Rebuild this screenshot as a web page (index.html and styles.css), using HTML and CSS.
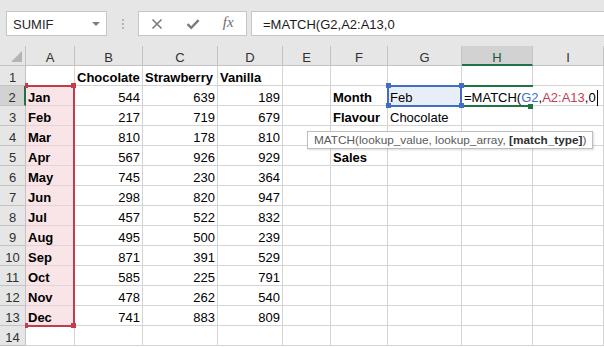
FILE: index.html
```html
<!DOCTYPE html>
<html>
<head>
<meta charset="utf-8">
<link rel="stylesheet" href="styles.css">
</head>
<body>
<div class="toolbar">
  <div class="namebox"><span>SUMIF</span><span class="caret"></span></div>
  <div class="grip"><i></i><i></i><i></i></div>
  <div class="fxbox">
    <span class="btn"><svg width="12" height="12" viewBox="0 0 12 12"><path d="M1.5 1.5 L10.5 10.5 M10.5 1.5 L1.5 10.5" stroke="#7b7b7b" stroke-width="1.6" fill="none"/></svg></span>
    <span class="btn"><svg width="14" height="12" viewBox="0 0 14 12"><path d="M1.5 6.2 L5.2 9.8 L12.6 2.2" stroke="#7b7b7b" stroke-width="2.4" fill="none"/></svg></span>
    <span class="btn fx">fx</span>
  </div>
  <div class="input">=MATCH(G2,A2:A13,0</div>
</div>
<div class="sheet">
  <div class="grid">
    <div class="hd corner"><span class="tri"></span></div>
    <div class="hd">A</div><div class="hd">B</div><div class="hd">C</div><div class="hd">D</div><div class="hd">E</div><div class="hd">F</div><div class="hd">G</div><div class="hd sel-col">H</div><div class="hd">I</div>

    <div class="rh">1</div><div class="c"></div><div class="c b">Chocolate</div><div class="c b">Strawberry</div><div class="c b">Vanilla</div><div class="c"></div><div class="c"></div><div class="c"></div><div class="c"></div><div class="c"></div>

    <div class="rh sel-row">2</div><div class="c b pink">Jan</div><div class="c n">544</div><div class="c n">639</div><div class="c n">189</div><div class="c"></div><div class="c b">Month</div><div class="c blue">Feb</div><div class="c over">=MATCH(<span class="ref-g">G2</span>,<span class="ref-a">A2:A13</span>,0<span class="cursor"></span></div><div class="c"></div>

    <div class="rh">3</div><div class="c b pink">Feb</div><div class="c n">217</div><div class="c n">719</div><div class="c n">679</div><div class="c"></div><div class="c b">Flavour</div><div class="c">Chocolate</div><div class="c"></div><div class="c"></div>

    <div class="rh">4</div><div class="c b pink">Mar</div><div class="c n">810</div><div class="c n">178</div><div class="c n">810</div><div class="c"></div><div class="c"></div><div class="c"></div><div class="c"></div><div class="c"></div>

    <div class="rh">5</div><div class="c b pink">Apr</div><div class="c n">567</div><div class="c n">926</div><div class="c n">929</div><div class="c"></div><div class="c b">Sales</div><div class="c"></div><div class="c"></div><div class="c"></div>

    <div class="rh">6</div><div class="c b pink">May</div><div class="c n">745</div><div class="c n">230</div><div class="c n">364</div><div class="c"></div><div class="c"></div><div class="c"></div><div class="c"></div><div class="c"></div>

    <div class="rh">7</div><div class="c b pink">Jun</div><div class="c n">298</div><div class="c n">820</div><div class="c n">947</div><div class="c"></div><div class="c"></div><div class="c"></div><div class="c"></div><div class="c"></div>

    <div class="rh">8</div><div class="c b pink">Jul</div><div class="c n">457</div><div class="c n">522</div><div class="c n">832</div><div class="c"></div><div class="c"></div><div class="c"></div><div class="c"></div><div class="c"></div>

    <div class="rh">9</div><div class="c b pink">Aug</div><div class="c n">495</div><div class="c n">500</div><div class="c n">239</div><div class="c"></div><div class="c"></div><div class="c"></div><div class="c"></div><div class="c"></div>

    <div class="rh">10</div><div class="c b pink">Sep</div><div class="c n">871</div><div class="c n">391</div><div class="c n">529</div><div class="c"></div><div class="c"></div><div class="c"></div><div class="c"></div><div class="c"></div>

    <div class="rh">11</div><div class="c b pink">Oct</div><div class="c n">585</div><div class="c n">225</div><div class="c n">791</div><div class="c"></div><div class="c"></div><div class="c"></div><div class="c"></div><div class="c"></div>

    <div class="rh">12</div><div class="c b pink">Nov</div><div class="c n">478</div><div class="c n">262</div><div class="c n">540</div><div class="c"></div><div class="c"></div><div class="c"></div><div class="c"></div><div class="c"></div>

    <div class="rh">13</div><div class="c b pink">Dec</div><div class="c n">741</div><div class="c n">883</div><div class="c n">809</div><div class="c"></div><div class="c"></div><div class="c"></div><div class="c"></div><div class="c"></div>

    <div class="rh">14</div><div class="c"></div><div class="c"></div><div class="c"></div><div class="c"></div><div class="c"></div><div class="c"></div><div class="c"></div><div class="c"></div><div class="c"></div>
  </div>

  <div class="range-red">
    <span class="h tl"></span><span class="h tr"></span><span class="h bl"></span><span class="h br"></span>
  </div>
  <div class="range-blue">
    <span class="h tl"></span><span class="h tr"></span><span class="h bl"></span><span class="h br"></span>
  </div>
  <div class="active-green">
    <span class="h br"></span>
  </div>
  <div class="tooltip">MATCH(lookup_value, lookup_array, <b>[match_type]</b>)</div>
</div>
</body>
</html>
```

FILE: styles.css
```css
* { box-sizing: border-box; }

body {
  margin: 0;
  width: 604px;
  height: 347px;
  overflow: hidden;
  background: #ffffff;
  font-family: "Liberation Sans", Arial, sans-serif;
  font-size: 13px;
  color: #000;
}

/* ---------- formula bar ---------- */
.toolbar {
  height: 46px;
  background: #e6e6e6;
  display: flex;
  align-items: flex-start;
  padding: 11px 0 0 6px;
}

.namebox {
  width: 101px;
  height: 25px;
  background: #fff;
  border: 1px solid #c6c6c6;
  display: flex;
  align-items: center;
  justify-content: space-between;
  padding: 0 6px 0 6px;
  color: #262626;
  line-height: 15px;
  padding-top: 1px;
}

.caret {
  width: 0;
  height: 0;
  border-left: 4px solid transparent;
  border-right: 4px solid transparent;
  border-top: 4px solid #7f7f7f;
  margin-top: -1px;
}

.grip {
  width: 2px;
  margin: 8px 14px 0 15px;
  display: flex;
  flex-direction: column;
  gap: 2px;
}
.grip i {
  display: block;
  width: 2px;
  height: 2px;
  background: #b4b4b4;
}

.fxbox {
  width: 109px;
  height: 25px;
  background: #fff;
  border: 1px solid #c6c6c6;
  display: flex;
  align-items: center;
}

.btn {
  width: 36px;
  height: 23px;
  display: flex;
  align-items: center;
  justify-content: center;
}

.fx {
  font-family: "Liberation Serif", "Times New Roman", serif;
  font-style: italic;
  font-size: 15px;
  color: #6e6e6e;
  padding-bottom: 2px;
}

.input {
  flex: 1;
  margin-left: 4px;
  height: 25px;
  background: #fff;
  border: 1px solid #c6c6c6;
  border-right: none;
  padding: 5px 0 0 11px;
  line-height: 15px;
  color: #1a1a1a;
  white-space: nowrap;
}

/* ---------- sheet ---------- */
.sheet {
  position: relative;
}

.grid {
  display: grid;
  grid-template-columns: 26px 49px 68px 75px 65px 48px 57px 74px 71px 71px;
  grid-auto-rows: 20px;
}

.hd {
  background: #e6e6e6;
  border-right: 1px solid #c3c3c3;
  border-bottom: 1px solid #c3c3c3;
  text-align: center;
  padding-top: 4px;
  line-height: 15px;
  color: #303030;
}

.corner {
  position: relative;
}
.tri {
  position: absolute;
  right: 3px;
  bottom: 3px;
  width: 0;
  height: 0;
  border-left: 11px solid transparent;
  border-bottom: 11px solid #b4b4b4;
}

.sel-col {
  background: #d2d2d2;
  border-bottom: 2px solid #217346;
  color: #1e5b38;
}

.rh {
  background: #e6e6e6;
  border-right: 1px solid #c3c3c3;
  border-bottom: 1px solid #c3c3c3;
  text-align: center;
  padding-top: 4px;
  line-height: 15px;
  color: #303030;
}

.sel-row {
  background: #d2d2d2;
  border-right: 2px solid #217346;
}

.c {
  border-right: 1px solid #d4d4d4;
  border-bottom: 1px solid #d4d4d4;
  padding: 4px 2px 0 2px;
  line-height: 15px;
  white-space: nowrap;
  color: #000;
}

.b { font-weight: bold; }
.n { text-align: right; }
.pink { background: #f9e5e7; border-bottom-color: #e3d3d5; }
.blue { background: #e8eef8; }

.over {
  overflow: visible;
  border-right-color: transparent;
  position: relative;
  z-index: 2;
}
.ref-g { color: #3f6fc5; }
.ref-a { color: #c43b52; }
.cursor {
  display: inline-block;
  width: 1px;
  height: 16px;
  background: #000;
  vertical-align: -4px;
  margin-left: 1px;
}

/* ---------- overlays ---------- */
.range-red {
  position: absolute;
  left: 26px;
  top: 39px;
  width: 49px;
  height: 242px;
  border: 2px solid #c43b4a;
  border-left: none;
  z-index: 3;
}

.range-blue {
  position: absolute;
  left: 387px;
  top: 39px;
  width: 75px;
  height: 22px;
  border: 2px solid #3f6fc5;
  z-index: 4;
}

.active-green {
  position: absolute;
  left: 462px;
  top: 39px;
  width: 71px;
  height: 22px;
  border-top: 2px solid #217346;
  border-bottom: 2px solid #217346;
  z-index: 3;
}

.h {
  position: absolute;
  width: 5px;
  height: 5px;
}
.range-red .h { background: #c43b4a; }
.range-blue .h { background: #3f6fc5; }
.active-green .h { background: #217346; }

.range-red .tl { left: -1px; top: -4px; width: 3px; }
.range-red .tr { right: -3px; top: -4px; }
.range-red .bl { left: -1px; bottom: -3px; width: 3px; }
.range-red .br { right: -3px; bottom: -3px; }

.range-blue .tl { left: -3px; top: -4px; }
.range-blue .tr { right: -4px; top: -4px; }
.range-blue .bl { left: -3px; bottom: -3px; }
.range-blue .br { right: -4px; bottom: -3px; }

.active-green .br { right: 0; bottom: -4px; }

.tooltip {
  position: absolute;
  left: 307px;
  top: 85px;
  width: 286px;
  height: 18px;
  background: #fff;
  border: 1px solid #bdbdbd;
  box-shadow: 1px 1px 2px rgba(0, 0, 0, 0.15);
  padding: 1px 0 0 6px;
  font-size: 11.8px;
  line-height: 14px;
  color: #5a5a5a;
  white-space: nowrap;
  z-index: 5;
}
.tooltip b {
  color: #303030;
}
```
